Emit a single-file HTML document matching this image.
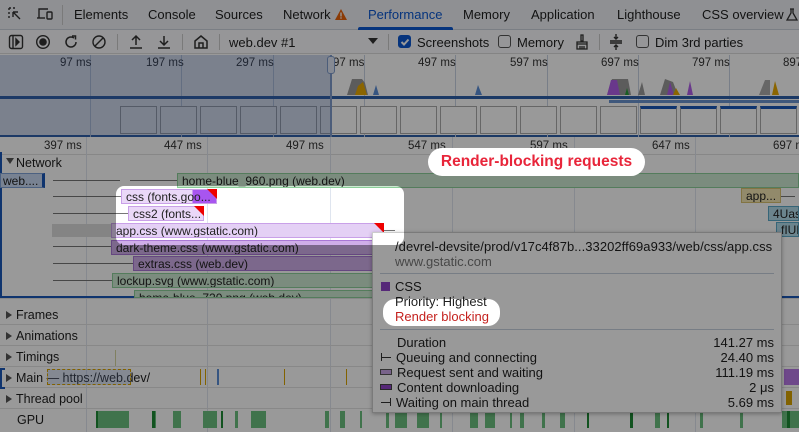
<!DOCTYPE html>
<html><head><meta charset="utf-8"><style>
*{margin:0;padding:0;box-sizing:border-box}
body{width:799px;height:432px;overflow:hidden;position:relative;background:#fff;font-family:"Liberation Sans",sans-serif;color:#1f1f1f}
.a{position:absolute;white-space:nowrap}
.t{font-size:13px;top:7px}
.l{font-size:11.5px;color:#333}
.bar{position:absolute;height:15px;font-size:12px;line-height:14px;padding-left:4px;overflow:hidden;white-space:nowrap;color:#222}
.g{background:#cdead2;border:1px solid #8ccf9a}
.p{background:#ead8f8;border:1px solid #c9a0e8}
.pd{background:#cfaee9;border:1px solid #a977d6}
.vl{position:absolute;width:1px;background:#c9d3e3}
.wh{position:absolute;height:1px;background:#777}
.row{position:absolute;left:0;width:799px;font-size:12.5px;border-bottom:1px solid #e3e3e3;height:21px}
.row span{position:absolute;left:16px;top:4px}
.row i{position:absolute;left:6px;top:7px;width:0;height:0;border-left:6px solid #555;border-top:4px solid transparent;border-bottom:4px solid transparent}
.cb{position:absolute;width:13px;height:13px;border:1px solid #555;border-radius:3px;top:35px}
.ss{position:absolute;top:106px;width:37px;height:28px;border:1px solid #aaa;background:#fff}
.tt{font-size:13px}
</style></head><body>
<div class="a" style="left:0;top:0;width:799px;height:30px;background:#eef1f6;border-bottom:1px solid #cbd2dd"></div>
<svg class="a" style="left:7px;top:6px" width="16" height="16" viewBox="0 0 16 16" fill="none" stroke="#333" stroke-width="1.4"><path d="M2 2h2M6 2h2M2 6v2M2 10v2M2 2v2" stroke-dasharray="2 1.5"/><path d="M6 6l7 7M6 6v5M6 6h5"/></svg>
<svg class="a" style="left:36px;top:6px" width="18" height="16" viewBox="0 0 18 16" fill="none" stroke="#333" stroke-width="1.4"><path d="M3 12V3h9"/><path d="M1 12h8"/><rect x="11" y="6" width="5" height="7" rx="1"/></svg>
<div class="a" style="left:62px;top:5px;width:1px;height:20px;background:#ccc"></div>
<div class="a t" style="left:74px">Elements</div>
<div class="a t" style="left:148px">Console</div>
<div class="a t" style="left:215px">Sources</div>
<div class="a t" style="left:283px">Network</div>
<svg class="a" style="left:334px;top:8px" width="14" height="13"><path d="M7 1L13 12H1Z" fill="#e8630a"/><rect x="6.3" y="4.5" width="1.4" height="4" fill="#fff"/><rect x="6.3" y="9.3" width="1.4" height="1.4" fill="#fff"/></svg>
<div class="a t" style="left:368px;color:#0b57d0">Performance</div>
<div class="a" style="left:358px;top:27px;width:95px;height:3px;background:#0b57d0;border-radius:2px 2px 0 0"></div>
<div class="a t" style="left:463px">Memory</div>
<div class="a t" style="left:531px">Application</div>
<div class="a t" style="left:617px">Lighthouse</div>
<div class="a t" style="left:702px">CSS overview</div>
<svg class="a" style="left:786px;top:8px" width="12" height="14" fill="none" stroke="#333" stroke-width="1.3"><path d="M4 1h4M5 1v4L1 12h10L7 5V1"/></svg>
<div class="a" style="left:0;top:30px;width:799px;height:24px;background:#fafbfd;border-bottom:1px solid #ddd"></div>
<svg class="a" style="left:8px;top:34px" width="16" height="16" fill="none" stroke="#333" stroke-width="1.4"><rect x="1.5" y="1.5" width="13" height="13" rx="2"/><path d="M5 2v12"/><path d="M8 5l3 3-3 3z" fill="#333"/></svg>
<svg class="a" style="left:35px;top:34px" width="16" height="16"><circle cx="8" cy="8" r="6.3" fill="none" stroke="#333" stroke-width="1.4"/><circle cx="8" cy="8" r="3.8" fill="#333"/></svg>
<svg class="a" style="left:63px;top:34px" width="16" height="16" fill="none" stroke="#333" stroke-width="1.5"><path d="M13 8a5 5 0 1 1-2-4"/><path d="M9 2h3.5v3.5"/></svg>
<svg class="a" style="left:91px;top:34px" width="16" height="16" fill="none" stroke="#333" stroke-width="1.4"><circle cx="8" cy="8" r="6"/><path d="M4 12L12 4"/></svg>
<div class="a" style="left:117px;top:34px;width:1px;height:16px;background:#ccc"></div>
<svg class="a" style="left:128px;top:34px" width="16" height="16" fill="none" stroke="#333" stroke-width="1.5"><path d="M8 11V2M4 6l4-4 4 4M2 14h12"/></svg>
<svg class="a" style="left:156px;top:34px" width="16" height="16" fill="none" stroke="#333" stroke-width="1.5"><path d="M8 2v9M4 7l4 4 4-4M2 14h12"/></svg>
<div class="a" style="left:182px;top:34px;width:1px;height:16px;background:#ccc"></div>
<svg class="a" style="left:193px;top:34px" width="16" height="16" fill="none" stroke="#333" stroke-width="1.5"><path d="M2 7l6-5 6 5v7H2z"/><path d="M6 14V9h4v5"/></svg>
<div class="a" style="left:219px;top:34px;width:1px;height:16px;background:#ccc"></div>
<div class="a" style="left:229px;top:35px;font-size:13px">web.dev #1</div>
<svg class="a" style="left:368px;top:38px" width="10" height="7"><path d="M0 0h10L5 6z" fill="#333"/></svg>
<div class="a" style="left:388px;top:34px;width:1px;height:16px;background:#ccc"></div>
<div class="cb" style="left:398px;background:#0b57d0;border-color:#0b57d0"></div>
<svg class="a" style="left:399px;top:36px" width="12" height="12" fill="none" stroke="#fff" stroke-width="2"><path d="M2.5 6l2.5 2.5 4.5-5"/></svg>
<div class="a" style="left:417px;top:35px;font-size:13px">Screenshots</div>
<div class="cb" style="left:498px"></div>
<div class="a" style="left:517px;top:35px;font-size:13px">Memory</div>
<svg class="a" style="left:574px;top:34px" width="16" height="16" fill="none" stroke="#333" stroke-width="1.3"><path d="M7 1h2v6H7zM3 8h10v2H3zM3 10v5h10v-5M6 12v3M8 12v3M10 12v3"/></svg>
<div class="a" style="left:599px;top:34px;width:1px;height:16px;background:#ccc"></div>
<svg class="a" style="left:609px;top:33px" width="14" height="18" fill="none" stroke="#333" stroke-width="1.4"><path d="M1 8h12M1 10h12M7 1v5M5 4l2 2 2-2M7 17v-5M5 14l2-2 2 2"/></svg>
<div class="cb" style="left:636px"></div>
<div class="a" style="left:655px;top:35px;font-size:13px">Dim 3rd parties</div>
<div class="a" style="left:0;top:54px;width:799px;height:83px;background:#fff;border-bottom:2px solid #2d5fa8"></div>
<div class="vl" style="left:90px;top:55px;height:82px"></div><div class="vl" style="left:181px;top:55px;height:82px"></div><div class="vl" style="left:273px;top:55px;height:82px"></div><div class="vl" style="left:364px;top:55px;height:82px"></div><div class="vl" style="left:455px;top:55px;height:82px"></div><div class="vl" style="left:547px;top:55px;height:82px"></div><div class="vl" style="left:638px;top:55px;height:82px"></div><div class="vl" style="left:729px;top:55px;height:82px"></div>
<div class="a l" style="left:60px;top:57px">97 ms</div><div class="a l" style="left:146px;top:57px">197 ms</div><div class="a l" style="left:236px;top:57px">297 ms</div><div class="a l" style="left:333px;top:57px">97 ms</div><div class="a l" style="left:418px;top:57px">497 ms</div><div class="a l" style="left:510px;top:57px">597 ms</div><div class="a l" style="left:601px;top:57px">697 ms</div><div class="a l" style="left:692px;top:57px">797 ms</div><div class="a l" style="left:783px;top:57px">897</div>
<svg class="a" style="left:0;top:70px" width="799" height="30">
<path d="M347 25l5-16h10l3 4 3 12z" fill="#999"/><path d="M355 25l3-9 5-4 4 13z" fill="#e8a800"/><path d="M373 25l3-10 3 10z" fill="#5b8ed8"/>
<path d="M475 25l3-10 4 10z" fill="#5b8ed8"/>
<path d="M607 25l5-16h16l3 16z" fill="#999"/><path d="M607 25l4-15h6l3 15z" fill="#b05ee8"/><path d="M625 25l2-7 2 7z" fill="#2a9d3a"/>
<path d="M638 25l4-13 3 13z" fill="#999"/><path d="M660 25l5-16 8 3 5 13z" fill="#999"/><path d="M667 25l3-13 4 13z" fill="#b05ee8"/><path d="M673 25l3-7 4 7z" fill="#e8a800"/><path d="M687 25l3-14 3 14z" fill="#b05ee8"/>
<path d="M759 25l6-15 5 0v15z" fill="#aaa"/><path d="M772 25l3-14 4 14z" fill="#e8a800"/>
<rect x="0" y="26" width="799" height="3" fill="#2d5fa8"/>
</svg>
<div class="a" style="left:609px;top:100px;width:190px;height:3px;background:#6a93cf"></div>
<div class="ss" style="left:120px"></div><div class="ss" style="left:160px"></div><div class="ss" style="left:200px"></div><div class="ss" style="left:240px"></div><div class="ss" style="left:280px"></div><div class="ss" style="left:320px"></div><div class="ss" style="left:360px"></div><div class="ss" style="left:400px"></div><div class="ss" style="left:440px"></div><div class="ss" style="left:480px"></div><div class="ss" style="left:520px"></div><div class="ss" style="left:560px"></div><div class="ss" style="left:600px"></div>
<div class="ss" style="left:640px;border-top:3px solid #1a57b8"></div><div class="ss" style="left:680px;border-top:3px solid #1a57b8"></div><div class="ss" style="left:720px;border-top:3px solid #1a57b8"></div><div class="ss" style="left:760px;border-top:3px solid #1a57b8"></div>
<div class="a" style="left:0;top:55px;width:330px;height:82px;background:rgba(60,100,180,0.25)"></div>
<div class="a" style="left:330px;top:55px;width:2px;height:82px;background:#7f9ccc"></div>
<div class="a" style="left:327px;top:56px;width:8px;height:18px;border:1px solid #7f9ccc;background:#dfe7f5;border-radius:3px"></div>
<div class="a" style="left:0;top:137px;width:799px;height:18px;background:#fff;border-bottom:1px solid #e2e2e2"></div>
<div class="a l" style="left:44px;top:140px">397 ms</div><div class="a l" style="left:164px;top:140px">447 ms</div><div class="a l" style="left:286px;top:140px">497 ms</div><div class="a l" style="left:408px;top:140px">547 ms</div><div class="a l" style="left:530px;top:140px">597 ms</div><div class="a l" style="left:652px;top:140px">647 ms</div><div class="a l" style="left:773px;top:140px">697 ms</div>
<div class="vl" style="left:86px;top:137px;height:295px;background:#dfe5ef"></div><div class="vl" style="left:207px;top:137px;height:295px;background:#dfe5ef"></div><div class="vl" style="left:330px;top:137px;height:295px;background:#dfe5ef"></div><div class="vl" style="left:452px;top:137px;height:295px;background:#dfe5ef"></div><div class="vl" style="left:574px;top:137px;height:295px;background:#dfe5ef"></div><div class="vl" style="left:695px;top:137px;height:295px;background:#dfe5ef"></div>
<div class="a" style="left:6px;top:158px;width:0;height:0;border-top:6px solid #555;border-left:4px solid transparent;border-right:4px solid transparent"></div>
<div class="a" style="left:16px;top:156px;font-size:12.5px">Network</div>
<div class="a" style="left:0;top:152px;width:2px;height:146px;background:#1a57b8"></div>
<div class="a" style="left:0;top:296px;width:799px;height:2px;background:#1a57b8"></div>
<div class="bar" style="left:0;top:173px;width:45px;background:#c9d9f3;border:1px solid #7fa2d8;border-right:3px solid #1a57b8;padding-left:2px">web....</div>
<div class="wh" style="left:53px;top:180px;width:67px"></div><div class="wh" style="left:130px;top:180px;width:47px"></div>
<div class="bar g" style="left:177px;top:173px;width:622px">home-blue_960.png (web.dev)</div>
<div class="wh" style="left:53px;top:196px;width:68px"></div>
<div class="bar p" style="left:121px;top:189px;width:96px;background:linear-gradient(90deg,#ead8f8 75%,#a855f0 75%)">css (fonts.goo...</div>
<svg class="a" style="left:207px;top:189px" width="10" height="10"><path d="M0 0h10v10z" fill="#e00"/></svg>
<div class="wh" style="left:53px;top:213px;width:75px"></div>
<div class="bar p" style="left:128px;top:206px;width:76px">css2 (fonts...</div>
<svg class="a" style="left:194px;top:206px" width="10" height="10"><path d="M0 0h10v10z" fill="#e00"/></svg>
<div class="a" style="left:52px;top:224px;width:60px;height:13px;background:#ddd"></div>
<div class="bar p" style="left:111px;top:223px;width:273px;background:#e4d0f5">app.css (www.gstatic.com)</div>
<svg class="a" style="left:374px;top:223px" width="10" height="10"><path d="M0 0h10v10z" fill="#e00"/></svg>
<div class="wh" style="left:384px;top:230px;width:11px"></div>
<div class="wh" style="left:53px;top:246px;width:58px"></div>
<div class="bar pd" style="left:111px;top:240px;width:262px">dark-theme.css (www.gstatic.com)</div>
<div class="wh" style="left:53px;top:263px;width:80px"></div>
<div class="bar pd" style="left:133px;top:256px;width:240px">extras.css (web.dev)</div>
<div class="wh" style="left:53px;top:280px;width:59px"></div>
<div class="bar g" style="left:112px;top:273px;width:261px">lockup.svg (www.gstatic.com)</div>
<div class="bar g" style="left:134px;top:290px;width:239px;height:8px">home-blue_720.png (web.dev)</div>
<div class="bar" style="left:741px;top:188px;width:40px;background:#f3e6b3;border:1px solid #d9c170">app...</div>
<div class="wh" style="left:781px;top:196px;width:14px"></div>
<div class="bar" style="left:768px;top:206px;width:31px;background:#b3dcec;border:1px solid #5aa9c8">4Uas</div>
<div class="bar" style="left:776px;top:222px;width:23px;background:#b3dcec;border:1px solid #5aa9c8">fIUN</div>
<div class="row" style="top:298px;height:1px"></div>
<div class="row" style="top:304px"><i></i><span>Frames</span></div>
<div class="row" style="top:325px"><i></i><span>Animations</span></div>
<div class="row" style="top:346px"><i></i><span>Timings</span></div>
<div class="row" style="top:367px"><i></i><span>Main — https://web.dev/</span></div>
<div class="row" style="top:388px"><i></i><span>Thread pool</span></div>
<div class="row" style="top:409px;border:none"><span style="left:17px">GPU</span></div>
<div class="a" style="left:0;top:368px;width:5px;height:21px;border:2px solid #1a57b8;border-right:none"></div>
<div class="a" style="left:47px;top:369px;width:84px;height:16px;border:1px dashed #d9a300;background:rgba(120,150,210,.25)"></div>
<div class="a" style="left:200px;top:369px;width:1px;height:16px;background:#d9a300"></div><div class="a" style="left:205px;top:369px;width:1px;height:16px;background:#d9a300"></div><div class="a" style="left:217px;top:369px;width:2px;height:16px;background:#5b8ed8"></div><div class="a" style="left:284px;top:369px;width:1px;height:16px;background:#d9a300"></div><div class="a" style="left:346px;top:369px;width:1px;height:16px;background:#d9a300"></div>
<div class="a" style="left:115px;top:350px;width:1px;height:16px;background:#d6d6a0"></div>
<svg class="a" style="left:0;top:411px" width="799" height="18"><g fill="#6cc07f"><rect x="96" y="0" width="33" height="17"/><rect x="152" y="0" width="4" height="17"/><rect x="173" y="0" width="8" height="17"/><rect x="203" y="0" width="14" height="17"/><rect x="235" y="0" width="3" height="17"/><rect x="251" y="0" width="15" height="17"/><rect x="325" y="0" width="4" height="17"/><rect x="340" y="0" width="5" height="17"/><rect x="360" y="0" width="2" height="17"/><rect x="386" y="0" width="3" height="17"/><rect x="395" y="0" width="12" height="17"/><rect x="417" y="0" width="12" height="17"/><rect x="440" y="0" width="2" height="17"/><rect x="470" y="0" width="8" height="17"/><rect x="485" y="0" width="10" height="17"/><rect x="510" y="0" width="2" height="17"/><rect x="520" y="0" width="4" height="17"/><rect x="542" y="0" width="3" height="17"/><rect x="560" y="0" width="5" height="17"/><rect x="655" y="0" width="5" height="17"/><rect x="700" y="0" width="3" height="17"/><rect x="740" y="0" width="3" height="17"/><rect x="782" y="0" width="17" height="17"/></g><g fill="#1f8a36"><rect x="96" y="0" width="2" height="17"/><rect x="152" y="0" width="3" height="17"/><rect x="221" y="0" width="2" height="17"/><rect x="587" y="0" width="2" height="17"/><rect x="630" y="0" width="3" height="17"/><rect x="667" y="0" width="2" height="17"/><rect x="787" y="0" width="3" height="17"/></g></svg>
<div class="a" style="left:784px;top:369px;width:15px;height:16px;background:#b878e6"></div>
<div class="a" style="left:786px;top:391px;width:6px;height:14px;background:#d9a300"></div>
<div class="a" style="left:372px;top:232px;width:410px;height:181px;background:#fff;border:1px solid #ccc;box-shadow:0 1px 4px rgba(0,0,0,.3)"></div>
<div class="a tt" style="left:395px;top:239px;letter-spacing:0.05px">/devrel-devsite/prod/v17c4f87b...33202ff69a933/web/css/app.css</div>
<div class="a tt" style="left:395px;top:254px;color:#777">www.gstatic.com</div>
<div class="a" style="left:380px;top:273px;width:394px;height:1px;background:#c7d0de"></div>
<div class="a" style="left:381px;top:282px;width:9px;height:9px;background:#8f44c8"></div>
<div class="a tt" style="left:395px;top:279px">CSS</div>
<div class="a tt" style="left:395px;top:294px">Priority: Highest</div>
<div class="a tt" style="left:395px;top:309px;color:#c5221f">Render blocking</div>
<div class="a" style="left:380px;top:329px;width:394px;height:1px;background:#c7d0de"></div>
<div class="a tt" style="left:397px;top:335px">Duration</div><div class="a tt" style="right:25px;top:335px">141.27 ms</div>
<div class="a" style="left:381px;top:357px;width:10px;height:1px;background:#333"></div><div class="a" style="left:381px;top:353px;width:1px;height:8px;background:#333"></div>
<div class="a tt" style="left:396px;top:350px">Queuing and connecting</div><div class="a tt" style="right:25px;top:350px">24.40 ms</div>
<div class="a" style="left:380px;top:369px;width:12px;height:6px;background:#c9a6e6;border:1px solid #555"></div>
<div class="a tt" style="left:397px;top:365px">Request sent and waiting</div><div class="a tt" style="right:25px;top:365px">111.19 ms</div>
<div class="a" style="left:380px;top:384px;width:12px;height:6px;background:#8f44c8;border:1px solid #444"></div>
<div class="a tt" style="left:397px;top:380px">Content downloading</div><div class="a tt" style="right:25px;top:380px">2 μs</div>
<div class="a" style="left:381px;top:402px;width:10px;height:1px;background:#333"></div><div class="a" style="left:390px;top:398px;width:1px;height:8px;background:#333"></div>
<div class="a tt" style="left:396px;top:395px">Waiting on main thread</div><div class="a tt" style="right:25px;top:395px">5.69 ms</div>
<svg class="a" style="left:0;top:0" width="799" height="432"><path fill-rule="evenodd" fill="rgba(0,0,0,0.40)" d="M0 0H799V432H0Z M124 186H396A8 8 0 0 1 404 194V237A8 8 0 0 1 396 245H124A8 8 0 0 1 116 237V194A8 8 0 0 1 124 186Z M395 299H488A12 12 0 0 1 500 311V314A12 12 0 0 1 488 326H395A12 12 0 0 1 383 314V311A12 12 0 0 1 395 299Z"/></svg>
<div class="a" style="left:428px;top:148px;width:217px;height:28px;background:#fff;border-radius:14px;color:#e8253a;font-size:15.5px;font-weight:bold;line-height:28px;text-align:center">Render-blocking requests</div>
</body></html>
